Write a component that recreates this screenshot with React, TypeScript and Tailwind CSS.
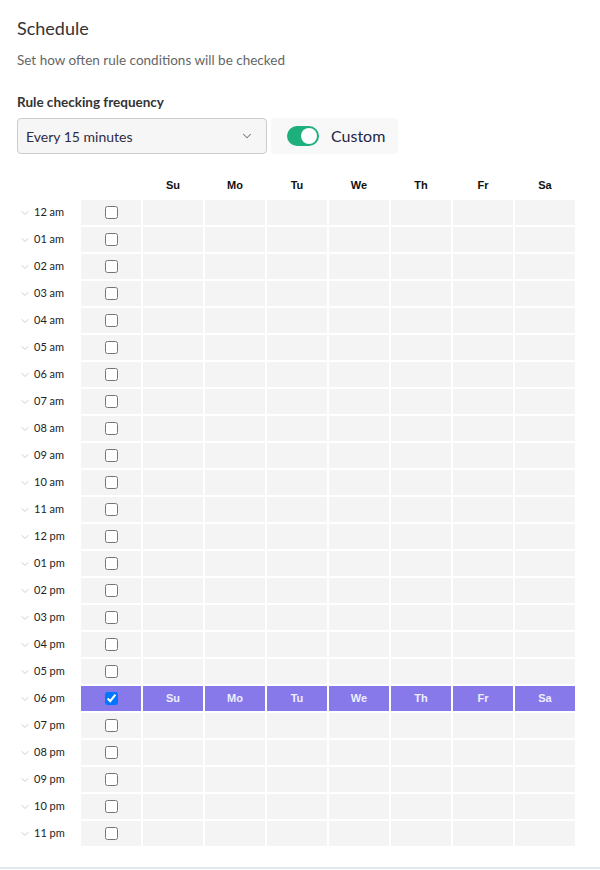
import { ChevronDown } from 'lucide-react'

const days = ['Su','Mo','Tu','We','Th','Fr','Sa']
const hours = ['12 am','01 am','02 am','03 am','04 am','05 am','06 am','07 am','08 am','09 am','10 am','11 am',
  '12 pm','01 pm','02 pm','03 pm','04 pm','05 pm','06 pm','07 pm','08 pm','09 pm','10 pm','11 pm']

export default function App() {
  return (
    <div className="w-[600px] h-[870px] bg-white flex flex-col font-['Lato',sans-serif] text-[#2b2b36]">
      <div className="flex-1 pl-[17px] pt-[17px]">
        <h1 className="text-[18px] leading-[22px] text-[#333]">Schedule</h1>
        <p className="mt-[12px] text-[13.5px] leading-[18px] text-[#666]">Set how often rule conditions will be checked</p>
        <div className="mt-[24px] text-[13.5px] leading-[18px] font-bold text-[#333]">Rule checking frequency</div>

        {/* frequency + custom toggle */}
        <div className="mt-[7px] flex gap-[4px]">
          <div className="w-[250px] h-[36px] flex items-center justify-between pl-[8px] pr-[12px] bg-[#f6f6f6] border border-[#ccc] rounded-[4px]">
            <span className="text-[14px] text-[#2e2b45]">Every 15 minutes</span>
            <ChevronDown className="w-[14px] h-[14px] text-[#777]" strokeWidth={1.75}/>
          </div>
          <div className="w-[127px] h-[36px] flex items-center gap-[12px] pl-[16px] bg-[#f8f8f8] rounded-[4px]">
            <div className="w-[32px] h-[20px] rounded-full bg-[#1db07c] flex items-center justify-end pr-[2px]">
              <div className="w-[16px] h-[16px] rounded-full bg-white"/>
            </div>
            <span className="text-[16px] text-[#1f2744]">Custom</span>
          </div>
        </div>

        {/* schedule grid */}
        <div className="mt-[19px] grid grid-cols-[62px_60px_repeat(7,60px)] gap-[2px] w-[560px]">
          <div/><div/>
          {days.map(d => (
            <div key={d} className="h-[25px] flex items-center justify-center font-['Liberation_Sans',sans-serif] font-bold text-[11px] text-[#111]">{d}</div>
          ))}
          {hours.map(h => {
            const on = h === '06 pm'
            return (
              <div key={h} className="contents">
                <div className="h-[25px] flex items-center gap-[3px] pl-[2px] text-[11px] text-[#222]">
                  <ChevronDown className="w-[12px] h-[12px] text-[#bbb]" strokeWidth={1.5}/>
                  {h}
                </div>
                <div className={`h-[25px] flex items-center justify-center ${on ? 'bg-[#8779e9]' : 'bg-[#f4f4f4]'}`}>
                  <input type="checkbox" defaultChecked={on} className="w-[13px] h-[13px] m-0"/>
                </div>
                {days.map(d => (
                  <div key={d} className={`h-[25px] flex items-center justify-center font-['Liberation_Sans',sans-serif] font-bold text-[11px] ${on ? 'bg-[#8779e9] text-[#eef]' : 'bg-[#f4f4f4]'}`}>
                    {on ? d : ''}
                  </div>
                ))}
              </div>
            )
          })}
        </div>
      </div>
      <div className="h-[2px] bg-[#e3e8ee] mb-[1px]"/>
    </div>
  )
}
